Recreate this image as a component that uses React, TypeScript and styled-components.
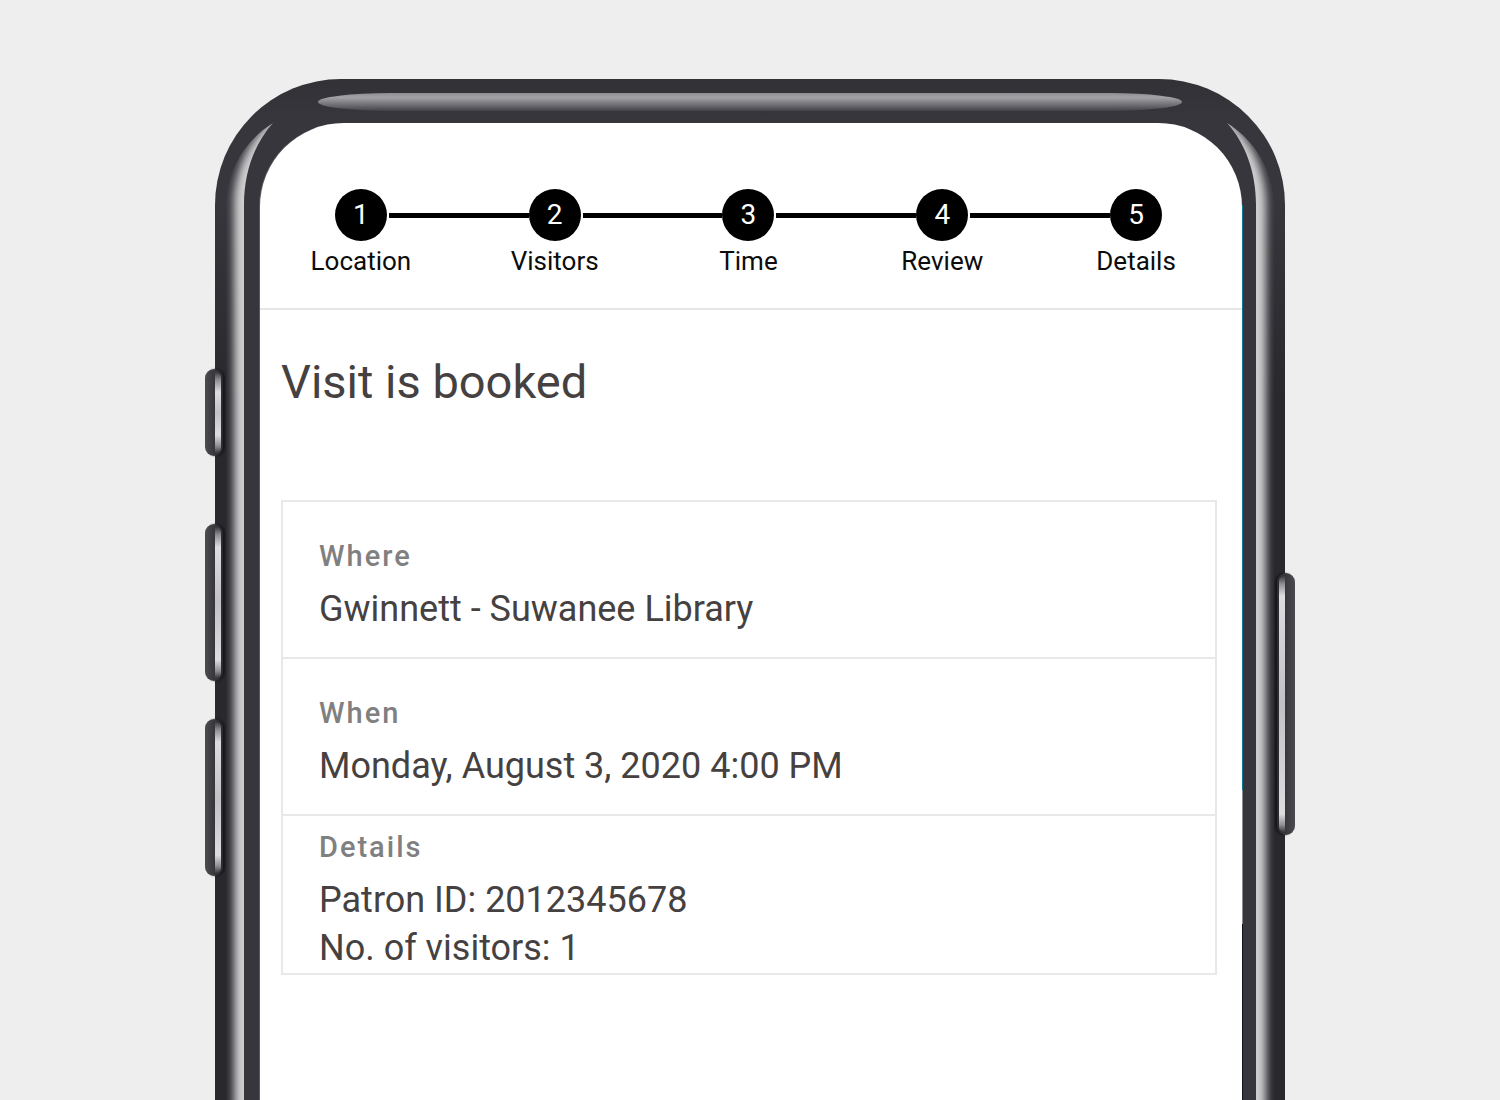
import React from "react";
import styled, { createGlobalStyle } from "styled-components";

const GlobalStyle = createGlobalStyle`
  *, *::before, *::after { box-sizing: border-box; }
  body {
    margin: 0;
    background: #eeeeee;
    font-family: Roboto, "Liberation Sans", sans-serif;
  }
  h1, h2, p, dl, dt, dd, ol { margin: 0; padding: 0; }
`;

const Stage = styled.main`
  display: flex;
  height: 100vh;
  min-height: 1020px;
  padding: 79px 215px 0;
  overflow: hidden;
`;

const Phone = styled.div`
  position: relative;
  flex: 1;
  min-width: 0;
  display: flex;
  padding: 44px 43px 0 45px;
  border-radius: 126px 126px 0 0;
  background: linear-gradient(to bottom, #323136, #37363c 44px, #37363c);
`;

const Screen = styled.div`
  position: relative;
  flex: 1;
  min-width: 0;
  border-radius: 84px 84px 0 0;
  background: #ffffff;
  box-shadow: -1px 0 0 #5a595f;
`;

const ScreenEdge = styled.span`
  position: absolute;
  top: 82px;
  bottom: 0;
  right: -1px;
  width: 1px;
  background: linear-gradient(
    to bottom,
    #12798c 585px,
    #8a8a8d 585px,
    #8a8a8d 719px,
    #0c1220 719px
  );
`;

const TopShine = styled.span`
  position: absolute;
  top: 14px;
  left: 103px;
  right: 103px;
  height: 18px;
  border-radius: 72px / 9px;
  background: linear-gradient(to bottom, #8e8d91, #a3a2a6 25%, #77767b 60%, #434248);
`;

const Rail = styled.svg<{ $side: "left" | "right" }>`
  position: absolute;
  top: 0;
  ${(p) => p.$side}: 0;
  width: 70px;
  height: 1400px;
  transform: ${(p) => (p.$side === "right" ? "scaleX(-1)" : "none")};
`;

const SideKey = styled.span<{ $side: "left" | "right"; $top: number; $length: number }>`
  position: absolute;
  top: ${(p) => p.$top}px;
  ${(p) => p.$side}: -10px;
  width: 18px;
  height: ${(p) => p.$length}px;
  border-radius: 9px;
  transform: ${(p) => (p.$side === "right" ? "scaleX(-1)" : "none")};
  background: linear-gradient(to right, #4c4b50, #39383d 50%, #2b2a2f);
  box-shadow: 2px 0 2px #17161a;

  &::after {
    content: "";
    position: absolute;
    top: 3px;
    bottom: 3px;
    right: 2px;
    width: 6px;
    border-radius: 1px 6px 6px 1px;
    background: linear-gradient(
      to bottom,
      #3a393e,
      #8f8e92 8px,
      #dedcdd 20px,
      #c3c1c6 50%,
      #dedcdd calc(100% - 18px),
      #8f8e92 calc(100% - 7px),
      #3a393e
    );
  }
`;

const Steps = styled.ol`
  display: flex;
  padding: 66px 9px 31px 4px;
  border-bottom: 2px solid #e6e6e7;
  list-style: none;
`;

const Step = styled.li`
  position: relative;
  flex: 1;
  display: flex;
  flex-direction: column;
  align-items: center;
  gap: 4px;

  &:not(:last-child)::after {
    content: "";
    position: absolute;
    top: 24px;
    left: calc(50% + 28px);
    right: calc(26px - 50%);
    height: 5px;
    background: #000000;
  }
`;

const StepNumber = styled.span`
  display: grid;
  place-items: center;
  width: 52px;
  height: 52px;
  border-radius: 50%;
  background: #000000;
  color: #ffffff;
  font-size: 28px;
  line-height: 32px;
`;

const StepLabel = styled.span`
  color: #0c0c0c;
  font-size: 26px;
  line-height: 32px;
`;

const Title = styled.h1`
  padding: 42px 21px;
  color: #464141;
  font-size: 47px;
  font-weight: 400;
  line-height: 60px;
`;

const Summary = styled.dl`
  margin: 46px 25px 0 21px;
  border: 2px solid #e8e8e9;
`;

const Entry = styled.div<{ $compact?: boolean }>`
  padding: ${(p) => (p.$compact ? "13px 36px 1px" : "36px 36px 24px")};

  & + & { border-top: 2px solid #e8e8e9; }
`;

const Term = styled.dt`
  margin-bottom: 11px;
  color: #808080;
  font-size: 29px;
  font-weight: 500;
  letter-spacing: 2px;
  line-height: 36px;
`;

const Value = styled.dd`
  color: #464141;
  font-size: 36px;
  line-height: 48px;
`;

const steps = ["Location", "Visitors", "Time", "Review", "Details"];

const entries = [
  { term: "Where", values: ["Gwinnett - Suwanee Library"] },
  { term: "When", values: ["Monday, August 3, 2020 4:00 PM"] },
  { term: "Details", values: ["Patron ID: 2012345678", "No. of visitors: 1"], compact: true },
];

function RailShine({ side }: { side: "left" | "right" }) {
  const id = `rail-${side}`;
  return (
    <Rail $side={side} viewBox="0 0 70 1400" aria-hidden="true">
      <defs>
        <clipPath id={`${id}-clip`}>
          <path d="M58 44 C39 65 29 94 29 126 V1400 H11 V126 C12 92 29 62 58 44Z" />
        </clipPath>
        <filter id={`${id}-soft`} x="-50" y="-20" width="200" height="1500" filterUnits="userSpaceOnUse">
          <feGaussianBlur stdDeviation="4" />
        </filter>
        <linearGradient id={`${id}-shade`} x1="0" y1="0" x2="0" y2="1">
          <stop offset="0" stopColor="#29282d" stopOpacity="0" />
          <stop offset="1" stopColor="#29282d" />
        </linearGradient>
      </defs>
      <rect x="0" y="120" width="29" height="200" fill={`url(#${id}-shade)`} />
      <rect x="0" y="320" width="29" height="1080" fill="#29282d" />
      <g clipPath={`url(#${id}-clip)`}>
        <path
          d="M66 34 C36 54 19 90 19 126 V1400 H38 V126 C38 94 50 65 68 44Z"
          fill="#cfced0"
          filter={`url(#${id}-soft)`}
        />
      </g>
    </Rail>
  );
}

export default function App() {
  return (
    <>
      <GlobalStyle />
      <Stage>
        <Phone>
          <TopShine />
          <RailShine side="left" />
          <RailShine side="right" />
          <SideKey $side="left" $top={290} $length={87} />
          <SideKey $side="left" $top={445} $length={157} />
          <SideKey $side="left" $top={640} $length={157} />
          <SideKey $side="right" $top={494} $length={262} />
          <Screen>
            <ScreenEdge />
            <Steps>
              {steps.map((label, i) => (
                <Step key={label}>
                  <StepNumber>{i + 1}</StepNumber>
                  <StepLabel>{label}</StepLabel>
                </Step>
              ))}
            </Steps>
            <Title>Visit is booked</Title>
            <Summary>
              {entries.map((entry) => (
                <Entry key={entry.term} $compact={entry.compact}>
                  <Term>{entry.term}</Term>
                  {entry.values.map((value) => (
                    <Value key={value}>{value}</Value>
                  ))}
                </Entry>
              ))}
            </Summary>
          </Screen>
        </Phone>
      </Stage>
    </>
  );
}
